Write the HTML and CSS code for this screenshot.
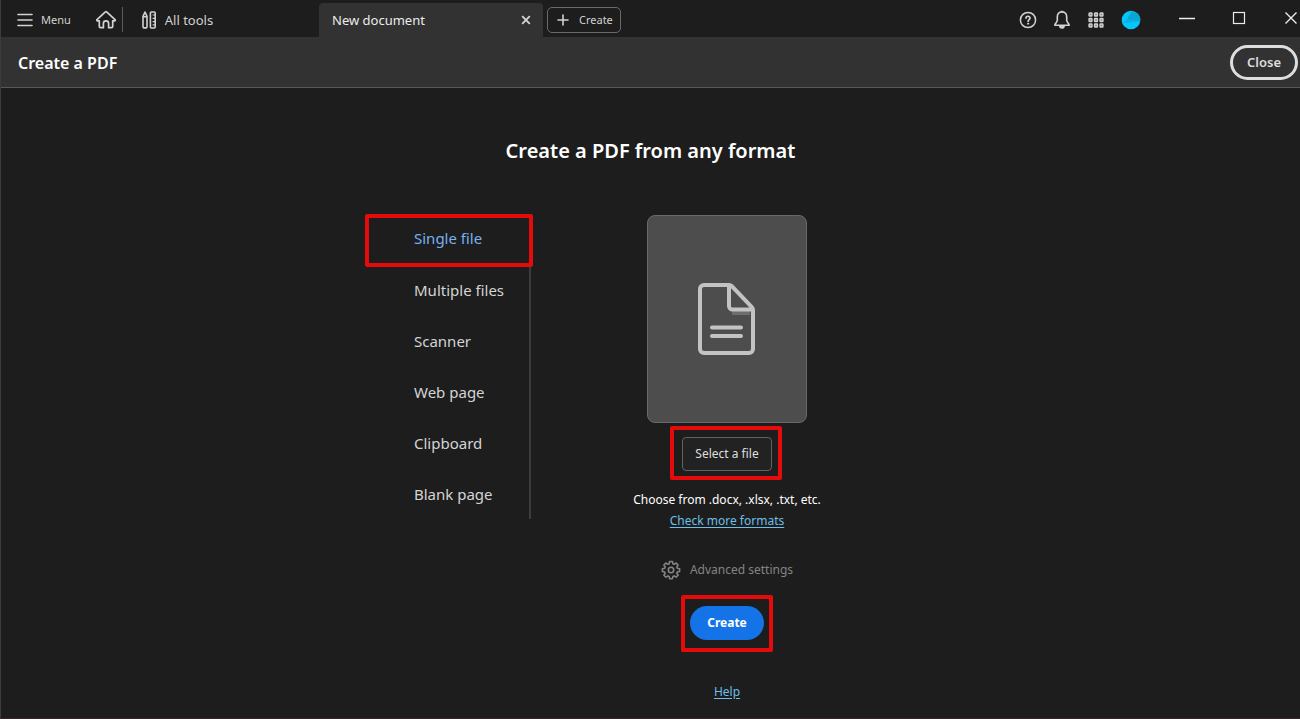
FILE: index.html
```html
<!DOCTYPE html>
<html lang="en">
<head>
<meta charset="utf-8">
<title>Create a PDF</title>
<link rel="stylesheet" href="styles.css">
</head>
<body>
<div class="window">
  <header class="topbar">
    <div class="tools">
      <button class="plain menu" type="button">
        <svg width="16" height="14" viewBox="0 0 16 14" fill="none" stroke="currentColor" stroke-width="1.6" stroke-linecap="round"><path d="M1 1.5h14M1 7h14M1 12.5h14"/></svg>
        Menu
      </button>
      <button class="plain home" type="button" aria-label="Home">
        <svg width="22" height="20" viewBox="0 0 22 20" fill="none" stroke="currentColor" stroke-width="1.7" stroke-linejoin="round" stroke-linecap="round"><path d="M10.1 2.1 2 9.6c-.5.5-.2 1.2.5 1.2h1.8v5.6c0 .8.5 1.3 1.2 1.3h2.9v-4.2a2.6 2.6 0 0 1 5.2 0v4.2h2.9c.7 0 1.2-.5 1.2-1.3v-5.6h1.8c.7 0 1-.7.5-1.2l-8.1-7.5c-.5-.5-1.3-.5-1.8 0z"/></svg>
      </button>
      <button class="plain all-tools" type="button">
        <svg width="14" height="18" viewBox="0 0 14 18" fill="none" stroke="currentColor" stroke-width="1.6" stroke-linejoin="round"><path d="M1 5.3 3 1l2 4.3v10.2c0 .9-.4 1.400-1 1.400H2c-.6 0-1-.5-1-1.400zM1 5.800h4"/><rect x="8.400" y="1" width="4.800" height="16" rx="1"/><path d="M10.600 4h2.500M10.600 7.300h2.500M10.600 10.600h2.500M10.600 13.900h2.500" stroke-width="1.200"/></svg>
        All tools
      </button>
    </div>
    <div class="tab">
      <span>New document</span>
      <button class="plain" type="button" aria-label="Close tab">
        <svg width="10" height="10" viewBox="0 0 10 10" stroke="#d2d2d2" stroke-width="1.900"><path d="m1.200 1.200 7.600 7.600M8.800 1.200 1.200 8.800"/></svg>
      </button>
    </div>
    <button class="new-tab" type="button">
      <svg width="12" height="12" viewBox="0 0 12 12" stroke="currentColor" stroke-width="1.600" stroke-linecap="round"><path d="M6 1v10M1 6h10"/></svg>
      Create
    </button>
    <div class="status">
      <button class="plain" type="button" aria-label="Help">
        <svg width="18" height="18" viewBox="0 0 18 18" fill="none" stroke="currentColor" stroke-width="1.500" stroke-linecap="round"><circle cx="9" cy="9" r="7.600"/><path d="M7 7.100c.2-2.600 4.200-2.300 4 .1-.1 1.400-1.900 1.500-1.900 3.100" stroke-width="1.700"/><circle cx="9.100" cy="12.700" r=".6" fill="currentColor" stroke-width=".9"/></svg>
      </button>
      <button class="plain" type="button" aria-label="Notifications">
        <svg width="18" height="20" viewBox="0 0 18 20" fill="none" stroke="currentColor" stroke-width="1.600" stroke-linejoin="round"><path d="M9 2C6 2 4.300 4.200 4.300 7.100v3.200c0 2-2.500 3.300-2.500 4.900h14.400c0-1.600-2.500-2.900-2.500-4.900V7.100C13.700 4.200 12 2 9 2z"/><path d="M7.700 1.600h2.600"/><path d="M6.800 15.800a2.200 2.200 0 0 0 4.400 0z" fill="currentColor"/></svg>
      </button>
      <button class="plain" type="button" aria-label="Apps">
        <svg width="18" height="16" viewBox="-1 0 18 16" fill="#8c8c8c" stroke="currentColor" stroke-width="1.300"><rect x="1" y="1" width="3" height="3" rx=".6"/><rect x="6.500" y="1" width="3" height="3" rx=".6"/><rect x="12" y="1" width="3" height="3" rx=".6"/><rect x="1" y="6.500" width="3" height="3" rx=".6"/><rect x="6.500" y="6.500" width="3" height="3" rx=".6"/><rect x="12" y="6.500" width="3" height="3" rx=".6"/><rect x="1" y="12" width="3" height="3" rx=".6"/><rect x="6.500" y="12" width="3" height="3" rx=".6"/><rect x="12" y="12" width="3" height="3" rx=".6"/></svg>
      </button>
      <button class="plain" type="button" aria-label="Account">
        <svg width="20" height="20" viewBox="0 0 20 20"><circle cx="10" cy="10" r="9.300" fill="#04c6fa"/><path d="M10.500 1.500 16.500 3.300A9.300 9.300 0 0 1 19.200 11.300L6 9.500z" fill="#0aa5d2"/><path d="M2.500 13 6 9.500l13.200 1.800z" fill="#08b0e0"/></svg>
      </button>
    </div>
    <div class="window-controls">
      <button class="plain" type="button" aria-label="Minimize">
        <svg width="16" height="16" viewBox="0 0 16 16" stroke="currentColor" stroke-width="1.500"><path d="M0 8.500h16"/></svg>
      </button>
      <button class="plain" type="button" aria-label="Maximize">
        <svg width="16" height="16" viewBox="0 0 16 16" fill="none" stroke="currentColor" stroke-width="1.200"><rect x="2.500" y="2.500" width="11" height="11"/></svg>
      </button>
      <button class="plain" type="button" aria-label="Close window">
        <svg width="16" height="16" viewBox="0 0 16 16" stroke="currentColor" stroke-width="1.400"><path d="m2.500 2.500 11 11M13.500 2.500l-11 11"/></svg>
      </button>
    </div>
  </header>

  <div class="titlebar">
    <h2>Create a PDF</h2>
    <button class="close" type="button">Close</button>
  </div>

  <main class="page">
    <h1>Create a PDF from any format</h1>
    <div class="columns">
      <nav class="sources">
        <a class="selected" href="#single">Single file</a>
        <a href="#multiple">Multiple files</a>
        <a href="#scanner">Scanner</a>
        <a href="#web">Web page</a>
        <a href="#clipboard">Clipboard</a>
        <a href="#blank">Blank page</a>
      </nav>
      <section class="picker">
        <div class="preview">
          <svg width="58" height="72" viewBox="0 0 58 72" fill="none" stroke="#c3c3c3" stroke-width="4" stroke-linejoin="round" stroke-linecap="round"><path d="M34 30h18" stroke="#6e6e6e" stroke-linecap="butt"/><path d="M31 2H6a4 4 0 0 0-4 4v60a4 4 0 0 0 4 4h45a4 4 0 0 0 4-4V27a4 4 0 0 0-1.200-2.800L33.800 3.200A4 4 0 0 0 31 2z"/><path d="M31 3v20a3.500 3.500 0 0 0 3.500 3.500H54"/><path d="M14 44.500h29M14 53h29"/></svg>
        </div>
        <div class="highlight highlight-select">
          <button class="select-file" type="button">Select a file</button>
        </div>
        <p class="hint">Choose from .docx, .xlsx, .txt, etc.</p>
        <a class="link" href="#formats">Check more formats</a>
        <button class="plain advanced" type="button" disabled>
          <svg width="20" height="20" viewBox="0 0 20 20" fill="none" stroke="currentColor" stroke-width="1.600" stroke-linejoin="round"><path d="M8.600 1.500h2.800l.5 2.300 1.200.5 2-1.300 2 2-1.300 2 .5 1.200 2.300.5v2.800l-2.300.5-.5 1.200 1.300 2-2 2-2-1.300-1.200.5-.5 2.300H8.600l-.5-2.300-1.200-.5-2 1.300-2-2 1.300-2-.5-1.200-2.300-.5V8.700l2.300-.5.5-1.200-1.300-2 2-2 2 1.300 1.200-.5z"/><circle cx="10" cy="10" r="2.700"/></svg>
          Advanced settings
        </button>
        <div class="highlight highlight-create">
          <button class="create" type="button">Create</button>
        </div>
        <a class="link" href="#help">Help</a>
      </section>
    </div>
  </main>
</div>
</body>
</html>
```
FILE: styles.css
```css
* {
  box-sizing: border-box;
}

body {
  margin: 0;
  background: #1d1d1d;
  color: #fff;
  font-family: "Noto Sans", "Open Sans", sans-serif;
  font-size: 13px;
  line-height: 20px;
}

h1,
h2,
p {
  margin: 0;
}

button {
  margin: 0;
  font: inherit;
  color: inherit;
}

svg {
  display: block;
  flex: none;
}

.window {
  min-height: 100vh;
  border-left: 1px solid #3c3c3c;
  border-bottom: 1px solid #332626;
  overflow: hidden;
}

.plain {
  display: flex;
  align-items: center;
  padding: 0;
  border: 0;
  background: none;
}

/* Top bar */
.topbar {
  display: flex;
  align-items: center;
  height: 37px;
  color: #d2d2d2;
}

.tools {
  display: flex;
  align-items: center;
  width: 318px;
  padding: 2px 0 0 16px;
}

.menu {
  gap: 8px;
  font-size: 11px;
}

.home {
  height: 25px;
  margin-left: 24px;
  padding-right: 5px;
  border-right: 1px solid #5a5a5a;
}

.all-tools {
  margin-left: 19px;
  gap: 9px;
}

.tab {
  display: flex;
  align-items: center;
  justify-content: space-between;
  align-self: flex-end;
  width: 224px;
  height: 34px;
  padding: 0 12px 0 13px;
  border-radius: 4px 4px 0 0;
  background: #323232;
  color: #ececec;
}

.new-tab {
  display: flex;
  align-items: center;
  gap: 10px;
  height: 26px;
  margin: 2px 0 0 4px;
  padding: 0 7px 0 9px;
  border: 1px solid #6a6a6a;
  border-radius: 5px;
  background: none;
  font-size: 11px;
}

.status {
  display: flex;
  align-items: center;
  gap: 16px;
  margin: 2px 38px 0 auto;
}

.window-controls {
  display: flex;
  gap: 36px;
  padding: 0 1px 1px 0;
  color: #ececec;
}

/* Title bar */
.titlebar {
  display: flex;
  align-items: center;
  justify-content: space-between;
  height: 51px;
  padding: 0 2px 0 17px;
  border-bottom: 1px solid #585858;
  background: #323232;
}

.titlebar h2 {
  padding-top: 2px;
  font-size: 16px;
  font-weight: 600;
}

.close {
  height: 35px;
  padding: 0 14px;
  border: 3px solid #dedede;
  border-radius: 18px;
  background: none;
  color: #dedede;
  font-weight: 600;
}

/* Page */
.page {
  display: flex;
  flex-direction: column;
  align-items: center;
  padding: 48px 20px 16px;
}

.page h1 {
  font-size: 20px;
  line-height: 30px;
  font-weight: 600;
}

.columns {
  display: flex;
  align-items: flex-start;
  gap: 98px;
  width: 100%;
  max-width: 571px;
  margin-top: 48px;
}

.sources {
  display: flex;
  flex-direction: column;
  width: 168px;
  font-size: 15px;
}

.sources a {
  display: flex;
  align-items: center;
  height: 51px;
  margin-right: 2px;
  padding: 0 0 5px 49px;
  border-right: 2px solid #3c3c3c;
  color: #d4d4d4;
  text-decoration: none;
}

.sources a:last-child {
  height: 48px;
  padding-bottom: 2px;
}

.sources .selected {
  height: 53px;
  margin-right: 0;
  padding-left: 45px;
  border: 4px solid #e60b0b;
  border-radius: 2px;
  color: #78b0ee;
}

.picker {
  display: flex;
  flex-direction: column;
  align-items: center;
  width: 192px;
  font-size: 12px;
  white-space: nowrap;
}

.preview {
  display: flex;
  align-items: center;
  justify-content: center;
  width: 160px;
  height: 208px;
  margin-top: 1px;
  border: 1px solid #696969;
  border-radius: 8px;
  background: #4d4d4d;
}

.highlight {
  border: 4px solid #e60b0b;
  border-radius: 2px;
}

.highlight-select {
  margin: 3px 2px 0 0;
  padding: 7px 6px 5px 8px;
}

.select-file {
  display: block;
  height: 34px;
  padding: 0 12px;
  border: 1px solid #626262;
  border-radius: 4px;
  background: #222;
  color: #dedede;
}

.hint {
  margin-top: 10px;
}

.link {
  margin-top: 1px;
  color: #6cbfe6;
  text-underline-offset: 2px;
}

.advanced {
  gap: 9px;
  margin-top: 29px;
  color: #848484;
}

.highlight-create {
  margin: 15px 0 29px;
  padding: 7px 5px 8px;
}

.create {
  display: block;
  height: 34px;
  padding: 0 17px;
  border: 0;
  border-radius: 17px;
  background: #1473e6;
  font-weight: 700;
}
```
